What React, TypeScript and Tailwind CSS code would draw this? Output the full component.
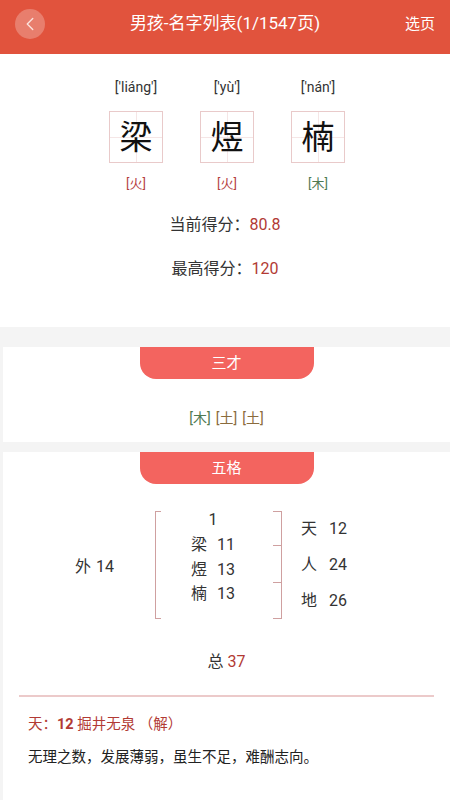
import { ChevronLeft } from 'lucide-react';

type NameChar = {
  char: string;
  pinyin: string;
  element: string;
  color: string;
};

const chars: NameChar[] = [
  { char: '梁', pinyin: "['liáng']", element: '火', color: 'text-[#b5403f]' },
  { char: '煜', pinyin: "['yù']", element: '火', color: 'text-[#b5403f]' },
  { char: '楠', pinyin: "['nán']", element: '木', color: 'text-[#4f7a52]' },
];

const font = "font-['Roboto','Noto_Sans_CJK_SC',sans-serif]";

function CharBox({ c }: { c: NameChar }) {
  return (
    <div className="flex w-[54px] flex-col items-center">
      <div className="h-[20px] whitespace-nowrap text-[14px] leading-[20px] text-[#333]">{c.pinyin}</div>
      {/* 田字格 */}
      <div className="relative mt-[14px] flex h-[52px] w-[54px] items-center justify-center border border-[#e9caca]">
        <div className="absolute left-0 right-0 top-1/2 h-px bg-[#f5e6e6]" />
        <div className="absolute bottom-0 left-1/2 top-0 w-px bg-[#f5e6e6]" />
        <span className="relative text-[33px] leading-none text-[#111]">{c.char}</span>
      </div>
      <div className={`mt-[11px] text-[13px] leading-[20px] ${c.color}`}>[{c.element}]</div>
    </div>
  );
}

function Tab({ label }: { label: string }) {
  return (
    <div className="flex justify-center">
      <div className="flex h-[32px] w-[174px] items-center justify-center rounded-b-[16px] bg-[#f3645f] text-[15px] text-white">
        {label}
      </div>
    </div>
  );
}

export default function App() {
  return (
    <div className={`min-h-[800px] w-[450px] bg-[#f4f4f4] ${font}`}>
      {/* HEADER */}
      <div className="flex h-[54px] items-center justify-between bg-[#e1533d] px-[15px] pb-[6px] text-white">
        <div className="flex h-[30px] w-[30px] items-center justify-center rounded-full bg-white/25">
          <ChevronLeft size={22} strokeWidth={1.5} className="text-[#fbe3de]" />
        </div>
        <div className="text-[17px]">男孩-名字列表(1/1547页)</div>
        <div className="text-[15px]">选页</div>
      </div>

      {/* NAME CARD */}
      <div className="bg-white pb-[47px] pt-[23px]">
        <div className="flex justify-center gap-[37px] pl-[4px]">
          {chars.map((c) => (
            <CharBox key={c.char} c={c} />
          ))}
        </div>
        <div className="mt-[20px] text-center text-[16px] leading-[22px] text-[#333]">
          当前得分：<span className="text-[#b23a34]">80.8</span>
        </div>
        <div className="mt-[22px] text-center text-[16px] leading-[22px] text-[#333]">
          最高得分：<span className="text-[#b23a34]">120</span>
        </div>
      </div>

      {/* 三才 */}
      <div className="ml-[3px] mt-[20px] bg-white pb-[14px]">
        <Tab label="三才" />
        <div className="mt-[29px] flex justify-center gap-[5px] text-[14px] leading-[20px]">
          <span className="text-[#4f7a52]">[木]</span>
          <span className="text-[#8a6b3c]">[土]</span>
          <span className="text-[#8a6b3c]">[土]</span>
        </div>
      </div>

      {/* 五格 */}
      <div className="ml-[3px] mt-[10px] bg-white pb-[38px]">
        <Tab label="五格" />

        <div className="mt-[27px] flex text-[16px] text-[#333]">
          <div className="flex w-[152px] items-center gap-[5px] pl-[72px] pt-[4px]">
            <span>外</span>
            <span>14</span>
          </div>
          <div className="h-[108px] w-[6px] border-y border-l border-[#cfa0a0]" />
          <div className="flex w-[112px] flex-col items-center pr-[8px]">
            <div className="h-[18px] leading-[18px]">1</div>
            <div className="mt-[4px] flex gap-[10px] leading-[24.5px]">
              <span>梁</span>
              <span>11</span>
            </div>
            <div className="flex gap-[10px] leading-[24.5px]">
              <span>煜</span>
              <span>13</span>
            </div>
            <div className="flex gap-[10px] leading-[24.5px]">
              <span>楠</span>
              <span>13</span>
            </div>
          </div>
          <div className="flex w-[9px] flex-col">
            <div className="h-[35px] border-y border-r border-[#cfa0a0]" />
            <div className="-mt-px h-[38px] border-y border-r border-[#cfa0a0]" />
            <div className="-mt-px h-[37px] border-y border-r border-[#cfa0a0]" />
          </div>
          <div className="flex flex-col pl-[19px]">
            {[
              ['天', '12'],
              ['人', '24'],
              ['地', '26'],
            ].map(([k, v]) => (
              <div key={k} className="flex gap-[12px] leading-[36px]">
                <span>{k}</span>
                <span>{v}</span>
              </div>
            ))}
          </div>
        </div>

        <div className="mt-[32px] text-center text-[16px] leading-[22px] text-[#333]">
          总 <span className="text-[#b23a34]">37</span>
        </div>

        <div className="mx-[16px] mt-[22px] h-[2px] bg-[#eccaca]" />

        <div className="mt-[17px] px-[25px] text-[14.5px] leading-[22px] text-[#b23a34]">
          天：<span className="font-bold">12</span> 掘井无泉 （解）
        </div>
        <div className="mt-[11px] px-[25px] text-[14.5px] leading-[22px] text-[#222]">
          无理之数，发展薄弱，虽生不足，难酬志向。
        </div>
      </div>
    </div>
  );
}
